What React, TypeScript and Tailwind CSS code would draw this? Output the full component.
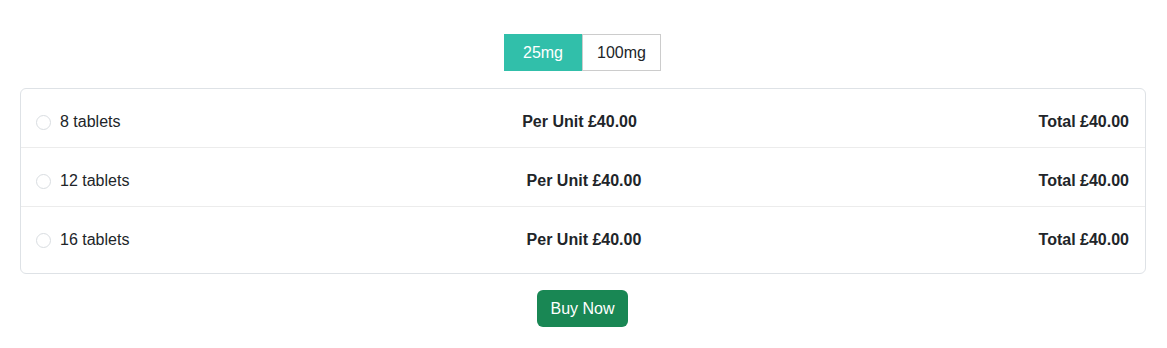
import { useState } from 'react';

const packs = [
  { id: 'p8', label: '8 tablets', unit: '£40.00', total: '£40.00' },
  { id: 'p12', label: '12 tablets', unit: '£40.00', total: '£40.00' },
  { id: 'p16', label: '16 tablets', unit: '£40.00', total: '£40.00' },
];

export default function App() {
  const [dose, setDose] = useState('25mg');
  const [pack, setPack] = useState<string | null>(null);

  return (
    <div className="min-h-screen bg-white pl-5 pr-[21px] pt-[34px] text-[16px] text-[#212529] font-['Liberation_Sans',Arial,sans-serif]">
      <div className="flex justify-center pr-px">
        {['25mg', '100mg'].map((d) => (
          <button
            key={d}
            onClick={() => setDose(d)}
            className={
              dose === d
                ? 'h-[37px] w-[78px] bg-[#31bfaa] text-white border border-[#31bfaa]'
                : 'h-[37px] w-[79px] bg-white text-[#212529] border border-[#cccccc]'
            }
          >
            {d}
          </button>
        ))}
      </div>

      <div className="mt-[17px] rounded-md border border-[#dee2e6] pb-2">
        {packs.map((p, i) => (
          <label
            key={p.id}
            className={`flex items-center justify-between pl-[15px] pr-4 pt-6 pb-4 leading-[18px] cursor-pointer ${
              i < packs.length - 1 ? 'border-b border-[#ececec]' : ''
            }`}
          >
            <span className="flex items-center">
              <input
                type="radio"
                name="pack"
                checked={pack === p.id}
                onChange={() => setPack(p.id)}
                className="sr-only"
              />
              <span className="h-[15px] w-[15px] rounded-full border border-[#d9dde1] bg-white" />
              <span className="ml-[9px]">{p.label}</span>
            </span>
            <span className="font-bold">Per Unit {p.unit}</span>
            <span className="font-bold">Total {p.total}</span>
          </label>
        ))}
      </div>

      <div className="mt-4 flex justify-center pr-px">
        <button className="h-[37px] w-[91px] rounded-md bg-[#198754] text-white">
          Buy Now
        </button>
      </div>
    </div>
  );
}
